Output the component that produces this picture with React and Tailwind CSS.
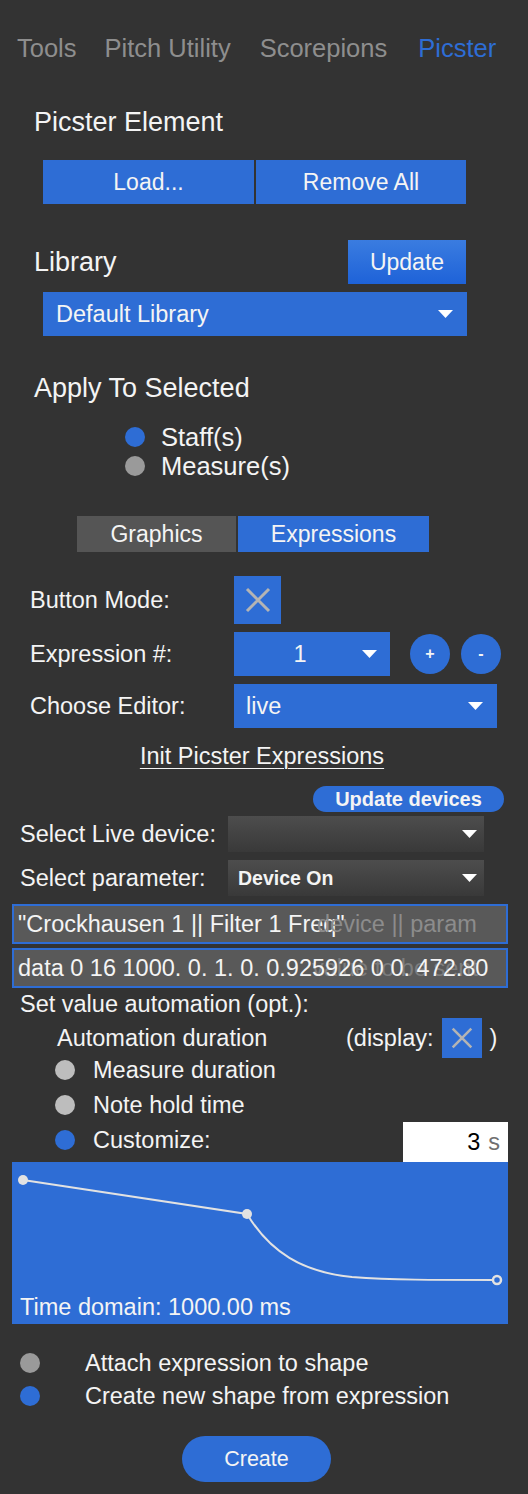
import React from "react";

const BLUE = "bg-[#2e6dd5]";

function Arrow({ className = "" }) {
  return (
    <svg width="15" height="8" viewBox="0 0 15 8" className={className}>
      <polygon points="0,0 15,0 7.5,8" fill="#ffffff" />
    </svg>
  );
}

function Cross({ size = 26 }) {
  return (
    <svg width={size} height={size} viewBox="0 0 26 26">
      <path d="M2 2 L24 24 M24 2 L2 24" stroke="#b4b4b4" strokeWidth="3" />
    </svg>
  );
}

function Dot({ color }) {
  return <div className={`w-[20px] h-[20px] rounded-full shrink-0 ${color}`} />;
}

export default function App() {
  return (
    <div
      className="w-[528px] min-h-[1494px] bg-[#333333] text-[#f4f4f4] text-[23.5px] leading-[28px] flex flex-col"
      style={{ fontFamily: '"Liberation Sans", Arial, sans-serif' }}
    >
      {/* top tabs */}
      <div className="flex gap-[28px] pl-[17px] pt-[33px] h-[63px] text-[25.5px] leading-[30px] text-[#8e8e8e]">
        <span>Tools</span>
        <span>Pitch Utility</span>
        <span className="ml-[1px]">Scorepions</span>
        <span className="ml-[3px] text-[#2e6dd5]">Picster</span>
      </div>

      <div className="mt-[43px] ml-[34px] text-[27px] leading-[32px]">Picster Element</div>

      <div className="mt-[22px] ml-[43px] flex gap-[2px] h-[44px] text-[23px]">
        <div className={`w-[211px] ${BLUE} flex items-center justify-center`}>Load...</div>
        <div className={`w-[210px] ${BLUE} flex items-center justify-center`}>Remove All</div>
      </div>

      {/* library */}
      <div className="mt-[36px] flex items-center h-[44px]">
        <span className="ml-[34px] text-[27px] leading-[32px]">Library</span>
        <div className="ml-auto mr-[62px] w-[118px] h-[44px] bg-gradient-to-b from-[#3a7ce0] to-[#1e62d8] flex items-center justify-center text-[23px]">
          Update
        </div>
      </div>
      <div className={`mt-[8px] ml-[43px] w-[424px] h-[44px] ${BLUE} flex items-center pl-[13px] pr-[14px] text-[23.5px]`}>
        <span>Default Library</span>
        <Arrow className="ml-auto" />
      </div>

      <div className="mt-[36px] ml-[34px] text-[27px] leading-[32px]">Apply To Selected</div>
      <div className="mt-[18px] ml-[125px] flex flex-col text-[25.5px]">
        <div className="h-[29px] flex items-center gap-[16px]">
          <Dot color="bg-[#2e6dd5]" />
          <span>Staff(s)</span>
        </div>
        <div className="h-[29px] flex items-center gap-[16px]">
          <Dot color="bg-[#9a9a9a]" />
          <span>Measure(s)</span>
        </div>
      </div>

      {/* graphics / expressions tabs */}
      <div className="mt-[36px] ml-[77px] flex gap-[2px] h-[36px] text-[23px]">
        <div className="w-[159px] bg-[#555555] flex items-center justify-center">Graphics</div>
        <div className={`w-[191px] ${BLUE} flex items-center justify-center`}>Expressions</div>
      </div>

      <div className="mt-[24px] flex items-center h-[48px]">
        <span className="ml-[30px] w-[204px]">Button Mode:</span>
        <div className={`w-[47px] h-[48px] ${BLUE} flex items-center justify-center`}>
          <Cross size={26} />
        </div>
      </div>

      <div className="mt-[8px] flex items-center h-[44px]">
        <span className="ml-[30px] w-[204px]">Expression #:</span>
        <div className={`w-[156px] h-[44px] ${BLUE} flex items-center pr-[13px]`}>
          <span className="flex-1 text-center pl-[4px]">1</span>
          <Arrow />
        </div>
        <div className={`ml-[20px] w-[40px] h-[40px] rounded-full ${BLUE} flex items-center justify-center text-[16px] font-bold`}>
          +
        </div>
        <div className={`ml-[11px] w-[40px] h-[40px] rounded-full ${BLUE} flex items-center justify-center text-[16px] font-bold`}>
          -
        </div>
      </div>

      <div className="mt-[8px] flex items-center h-[44px]">
        <span className="ml-[30px] w-[204px]">Choose Editor:</span>
        <div className={`w-[263px] h-[44px] ${BLUE} flex items-center pl-[12px] pr-[14px]`}>
          <span>live</span>
          <Arrow className="ml-auto" />
        </div>
      </div>

      <div className="mt-[14px] h-[28px] flex justify-center">
        <span className="underline underline-offset-[4px] decoration-1 ml-[-4px]">Init Picster Expressions</span>
      </div>

      {/* live device */}
      <div className="mt-[16px] flex justify-end pr-[24px]">
        <div className={`w-[191px] h-[26px] rounded-full ${BLUE} flex items-center justify-center text-[20px] font-bold leading-[24px]`}>
          Update devices
        </div>
      </div>

      <div className="mt-[4px] flex items-center h-[36px]">
        <span className="ml-[20px] w-[208px]">Select Live device:</span>
        <div className="w-[256px] h-[36px] bg-gradient-to-b from-[#4d4d4d] to-[#393939] flex items-center pr-[7px]">
          <Arrow className="ml-auto" />
        </div>
      </div>
      <div className="mt-[8px] flex items-center h-[36px]">
        <span className="ml-[20px] w-[208px]">Select parameter:</span>
        <div className="w-[256px] h-[36px] bg-gradient-to-b from-[#4d4d4d] to-[#393939] flex items-center pl-[10px] pr-[7px]">
          <span className="font-bold text-[19.5px]">Device On</span>
          <Arrow className="ml-auto" />
        </div>
      </div>

      <div className="mt-[8px] ml-[12px] w-[496px] h-[40px] border-2 border-[#2e6dd5] bg-[#595959] relative flex items-center pl-[4px] overflow-hidden">
        <span className="whitespace-nowrap">"Crockhausen 1 || Filter 1 Freq"</span>
        <span className="absolute left-[303px] text-[#8c8c8c] whitespace-nowrap">device || param</span>
      </div>
      <div className="mt-[4px] ml-[12px] w-[496px] h-[40px] border-2 border-[#2e6dd5] bg-[#595959] relative flex items-center pl-[4px] overflow-hidden">
        <span className="absolute left-[298px] text-[#7d7d7d] whitespace-nowrap">value to be sent</span>
        <span className="relative whitespace-nowrap">data 0 16 1000. 0. 1. 0. 0.925926 0 0. 472.80</span>
      </div>

      {/* automation */}
      <div className="mt-[2px] ml-[20px] h-[28px]">Set value automation (opt.):</div>
      <div className="flex items-center h-[40px]">
        <span className="ml-[57px] w-[289px]">Automation duration</span>
        <span>(display:</span>
        <div className={`ml-[8px] w-[40px] h-[40px] ${BLUE} flex items-center justify-center`}>
          <Cross size={22} />
        </div>
        <span className="ml-[8px]">)</span>
      </div>
      <div className="ml-[55px] h-[24px] flex items-center gap-[18px]">
        <Dot color="bg-[#bdbdbd]" />
        <span>Measure duration</span>
      </div>
      <div className="mt-[11px] ml-[55px] h-[24px] flex items-center gap-[18px]">
        <Dot color="bg-[#bdbdbd]" />
        <span>Note hold time</span>
      </div>
      <div className="mt-[5px] flex items-center h-[40px]">
        <div className="ml-[55px] flex items-center gap-[18px] mt-[-4px]">
          <Dot color="bg-[#2e6dd5]" />
          <span>Customize:</span>
        </div>
        <div className="ml-auto mr-[20px] w-[105px] h-[40px] bg-white flex items-center justify-end pr-[8px] gap-[8px]">
          <span className="text-black">3</span>
          <span className="text-[#707070]">s</span>
        </div>
      </div>

      <div className={`ml-[12px] w-[496px] h-[162px] ${BLUE} relative`}>
        <svg width="496" height="162" viewBox="0 0 496 162" className="absolute left-0 top-0">
          <path
            d="M11 18 L235 52 C258 90 290 110 340 115 C380 118 420 118 485 118"
            fill="none"
            stroke="#e2e2e2"
            strokeWidth="2"
          />
          <circle cx="11" cy="18" r="5" fill="#e2e2e2" />
          <circle cx="235" cy="52" r="5" fill="#e2e2e2" />
          <circle cx="485" cy="118" r="4" fill="#2e6dd5" stroke="#e2e2e2" strokeWidth="2.5" />
        </svg>
        <div className="absolute left-[8px] top-[131px] leading-[28px]">Time domain: 1000.00 ms</div>
      </div>

      <div className="mt-[22px] flex flex-col">
        <div className="h-[33px] flex items-center">
          <div className="ml-[20px] w-[65px]">
            <Dot color="bg-[#9a9a9a]" />
          </div>
          <span>Attach expression to shape</span>
        </div>
        <div className="h-[33px] flex items-center">
          <div className="ml-[20px] w-[65px]">
            <Dot color="bg-[#2e6dd5]" />
          </div>
          <span>Create new shape from expression</span>
        </div>
      </div>

      <div className="mt-[24px] flex">
        <div className={`ml-[182px] w-[149px] h-[46px] rounded-full ${BLUE} flex items-center justify-center text-[21.5px]`}>
          Create
        </div>
      </div>
    </div>
  );
}
